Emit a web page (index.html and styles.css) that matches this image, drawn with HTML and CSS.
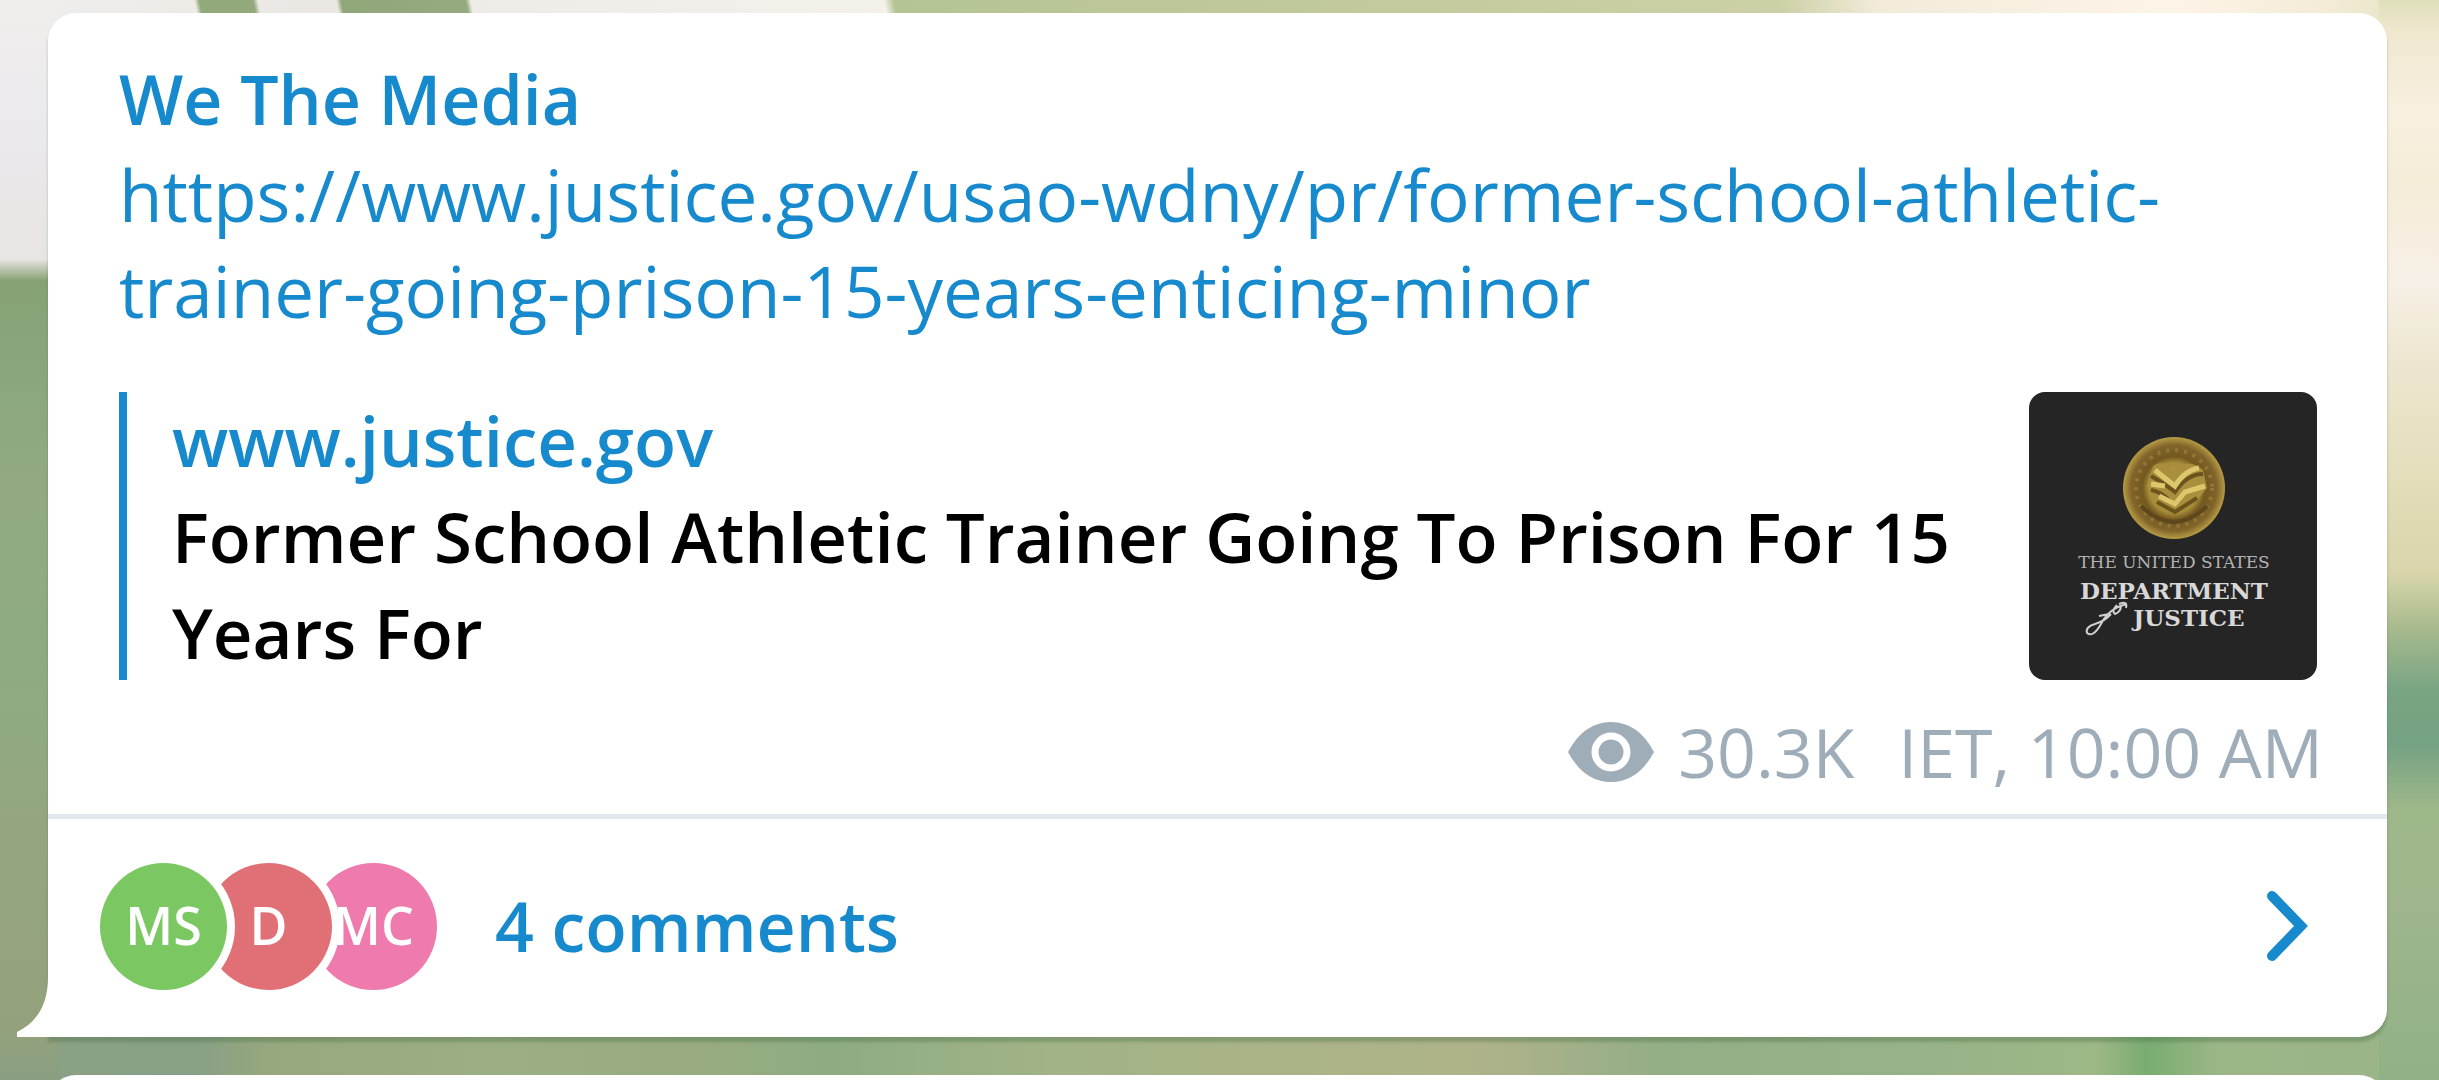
FILE: index.html
```html
<!DOCTYPE html>
<html lang="en">
<head>
    <meta charset="UTF-8">
    <meta name="viewport" content="width=device-width, initial-scale=1.0">
    <title>We The Media</title>
    <link rel="stylesheet" href="styles.css">
</head>
<body>
    <main class="chat">
        <article class="message">
            <div class="message-body">
                <h1 class="channel">We The Media</h1>
                <a class="link" href="https://www.justice.gov/usao-wdny/pr/former-school-athletic-trainer-going-prison-15-years-enticing-minor">https://www.justice.gov/usao-wdny/pr/former-school-athletic-trainer-going-prison-15-years-enticing-minor</a>

                <section class="preview">
                    <div class="preview-text">
                        <a class="preview-site" href="https://www.justice.gov">www.justice.gov</a>
                        <p class="preview-title">Former School Athletic Trainer Going To Prison For 15 Years For</p>
                    </div>
                    <svg class="thumb" viewBox="0 0 288 288" role="img" aria-label="The United States Department of Justice">
                        <defs>
                            <radialGradient id="gold">
                                <stop offset="0" stop-color="#c4ab50"/>
                                <stop offset="0.5" stop-color="#a58a38"/>
                                <stop offset="0.62" stop-color="#73581f"/>
                                <stop offset="0.84" stop-color="#80642a"/>
                                <stop offset="1" stop-color="#b79c44"/>
                            </radialGradient>
                        </defs>
                        <rect width="288" height="288" fill="#252525"/>
                        <circle cx="145" cy="96" r="51" fill="url(#gold)"/>
                        <circle cx="145" cy="96" r="38" fill="none" stroke="#91763a" stroke-width="4" stroke-dasharray="3 6"/>
                        <path d="M124 74 Q136 66 144 80 Q158 64 174 78 L178 96 L168 108 L146 120 L126 110 L118 94 Z" fill="#a98e3d"/>
                        <path d="M122 84 Q136 92 146 100 Q158 82 174 82 M122 98 Q132 100 140 108 M128 110 L146 120 L168 106" fill="none" stroke="#6b531c" stroke-width="4"/>
                        <path d="M126 78 Q138 88 146 94 Q156 78 170 76 M122 92 L136 94 M130 104 L146 112 L156 100 L176 94" fill="none" stroke="#dcc76c" stroke-width="5"/>
                        <path d="M112 114 Q145 146 178 114" fill="none" stroke="#5e471b" stroke-width="4"/>
                        <text class="thumb-small" x="145" y="176" text-anchor="middle">THE UNITED STATES</text>
                        <text class="thumb-large" x="145" y="207" text-anchor="middle">DEPARTMENT</text>
                        <text class="thumb-large" x="160" y="234" text-anchor="middle">JUSTICE</text>
                        <path d="M90 212 Q99 208 97 216 M88 213 Q82 219 86 222 Q92 220 92 213 M98 212 Q80 216 72 232 Q64 246 58 241 Q56 235 66 232 Q76 229 82 222 M70 224 L80 222" fill="none" stroke="#cfcfcf" stroke-width="2"/>
                    </svg>
                </section>

                <footer class="meta">
                    <svg class="eye" viewBox="0 0 86 60" aria-hidden="true">
                        <path d="M0 30 Q16 0 43 0 Q70 0 86 30 Q70 60 43 60 Q16 60 0 30 Z" fill="#9eadb8"/>
                        <circle cx="43" cy="30" r="16" fill="#9eadb8" stroke="#fff" stroke-width="7"/>
                    </svg>
                    <span class="views">30.3K</span>
                    <span>IET, 10:00 AM</span>
                </footer>
            </div>

            <button type="button" class="comments">
                <span class="avatars">
                    <span class="avatar green">MS</span>
                    <span class="avatar red">D</span>
                    <span class="avatar pink">MC</span>
                </span>
                <span class="comments-label">4 comments</span>
                <svg class="arrow" viewBox="0 0 42 72" aria-hidden="true">
                    <path d="M6 6 L35 36 L6 66" fill="none" stroke="#168acd" stroke-width="10" stroke-linecap="round"/>
                </svg>
            </button>
            <svg class="tail" viewBox="0 0 32 60" aria-hidden="true">
                <path d="M31 0 Q31 40 0 55 V60 H32 V0 Z" fill="#fff"/>
            </svg>
        </article>
        <article class="message next"></article>
    </main>
</body>
</html>
```
FILE: styles.css
```css
* {
    margin: 0;
    padding: 0;
    box-sizing: border-box;
}

body {
    font-family: "Open Sans", "Noto Sans", sans-serif;
    font-size: 68px;
    line-height: 96px;
    background: #97ab82;
    overflow: hidden;
}

/* blurred flower wallpaper, seen only around the messages */
.chat {
    height: 100vh;
    padding: 13px 52px 0 48px;
    overflow: hidden;
    background:
        linear-gradient(#f0eeec 0, #ebe9ed 12%, #e8e4e2 24%, #86a274 26%, #8aa77c 35%, #93a981 45%, #8eab82 60%, #95a57e 80%, #93a27c 95%, #8a9f82 100%) left / 60px 100% no-repeat,
        linear-gradient(#dfdfba 0, #efe8cf 3%, #f8efe0 10%, #f5ecd8 17%, #f7f0e6 26%, #ece6cf 34%, #e5dfbd 43%, #d9d5ab 53%, #a9bb8e 58%, #78a483 64%, #76a284 69%, #9fb88a 75%, #9fb58b 84%, #90b186 100%) right / 60px 100% no-repeat,
        linear-gradient(78deg, #efedee 0, #eeebe6 8.2%, #92a97c 8.4%, #92a97c 10.6%, #ebe8e5 10.8%, #ebe8e3 14%, #90a77a 14.2%, #96aa80 19.3%, #efece8 19.5%, #f4f0ea 36.4%, #b4c494 36.8%, #c6cba0 62%, #cdd0a6 73%, #f2ebda 77%, #fdf4e8 89%, #f4ecd8 95%, #e4e2bf 100%) top / 100% 30px no-repeat,
        linear-gradient(90deg, #8ca185 0, #87a086 8%, #97a77e 11%, #9cae84 20%, #98ab80 29%, #8eac81 34%, #a1b387 43%, #adb488 56%, #aeb28a 61%, #94ae85 68%, #98b288 78%, #9db787 86%, #79ac71 88%, #9cb688 91%, #9ab489 100%) bottom / 100% 60px no-repeat;
}

.message {
    position: relative;
    background: #fff;
    border-radius: 28px 28px 28px 0;
    box-shadow: 0 5px 3px rgba(70, 110, 70, 0.35);
}

.message-body {
    padding: 38px 64px 0 71px;
}

.channel {
    font-size: 68px;
    font-weight: 600;
    color: #168acd;
}

.link {
    display: block;
    font-size: 71px;
    color: #168acd;
    text-decoration: none;
}

.preview {
    display: flex;
    justify-content: space-between;
    gap: 40px;
    margin-top: 53px;
    padding: 0 6px 0 45px;
    border-left: 8px solid #168acd;
    font-size: 69px;
}

.preview-site {
    color: #168acd;
    font-weight: 600;
    text-decoration: none;
}

.preview-title {
    font-weight: 600;
    color: #000;
}

.thumb {
    flex: none;
    width: 288px;
    height: 288px;
    border-radius: 16px;
}

.thumb-small,
.thumb-large {
    font-family: "DejaVu Serif", serif;
    fill: #d8d8d8;
}

.thumb-small {
    font-size: 17px;
    fill: #b4b4b4;
}

.thumb-large {
    font-size: 23px;
    font-weight: bold;
}

.meta {
    display: flex;
    justify-content: flex-end;
    align-items: center;
    height: 134px;
    padding-top: 10px;
    color: #9eadb8;
}

.eye {
    width: 86px;
    height: 60px;
    margin-right: 24px;
}

.views {
    margin-right: 44px;
}

.comments {
    display: flex;
    align-items: center;
    width: 100%;
    height: 223px;
    padding: 0 79px 4px 52px;
    border: 0;
    border-top: 5px solid #e3e8ec;
    border-radius: 0 0 28px 0;
    background: none;
    font: inherit;
    font-weight: 600;
    color: #168acd;
    text-align: left;
    cursor: pointer;
}

.avatars {
    display: flex;
    margin-right: 58px;
}

.avatar {
    position: relative;
    width: 127px;
    height: 127px;
    margin-right: -22px;
    border-radius: 50%;
    box-shadow: 0 0 0 8px #fff;
    font-size: 52px;
    line-height: 124px;
    text-align: center;
    color: #fff;
}

.avatar:last-child {
    margin-right: 0;
}

.green {
    z-index: 3;
    background: #7bc862;
}

.red {
    z-index: 2;
    background: #e17076;
}

.pink {
    z-index: 1;
    background: #ee7aae;
}

.comments-label {
    flex: 1;
}

.arrow {
    width: 42px;
    height: 72px;
}

/* corner pointing to the sender */
.tail {
    position: absolute;
    left: -31px;
    bottom: 0;
    width: 32px;
    height: 60px;
}

.next {
    height: 200px;
    margin-top: 38px;
}
```
